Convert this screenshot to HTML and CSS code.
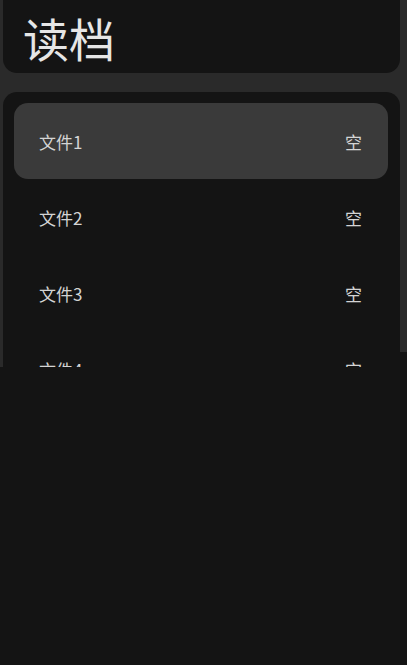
FILE: index.html
```html
<!DOCTYPE html>
<html>

<head>
    <title>读档</title>
    <link rel="stylesheet" href="styles.css">
</head>

<body>
    <div class="screen">
        <div class="title-card">
            <h1>读档</h1>
        </div>
        <div class="list-card">
            <div class="item selected"><span>文件1</span><span>空</span></div>
            <div class="item"><span>文件2</span><span>空</span></div>
            <div class="item"><span>文件3</span><span>空</span></div>
            <div class="item"><span>文件4</span><span>空</span></div>
        </div>
    </div>
</body>

</html>
```

FILE: styles.css
```css
body {
    margin: 0;
    background-color: #141414;
    font-family: "Noto Sans CJK SC", "Noto Sans", sans-serif;
}

.screen {
    height: 367px;
    overflow: hidden;
    padding: 0 7px 0 3px;
    background: linear-gradient(#141414, #141414) right bottom / 7px 15px no-repeat, #2a2a2a;
}

.title-card {
    height: 73px;
    background-color: #141414;
    border-radius: 0 0 14px 14px;
    display: flex;
    align-items: center;
    padding-left: 20px;
    margin-bottom: 19px;
}

h1 {
    margin: 0;
    font-size: 46px;
    font-weight: 400;
    color: #e6e6e6;
    line-height: 1;
}

.list-card {
    background-color: #141414;
    border-radius: 14px;
    padding: 11px 12px 11px 11px;
}

.item {
    height: 76px;
    display: flex;
    align-items: center;
    justify-content: space-between;
    padding: 0 26px 0 25px;
    border-radius: 14px;
    font-size: 17px;
    color: #d4d4d4;
}

.selected {
    background-color: #3a3a3a;
}
```
